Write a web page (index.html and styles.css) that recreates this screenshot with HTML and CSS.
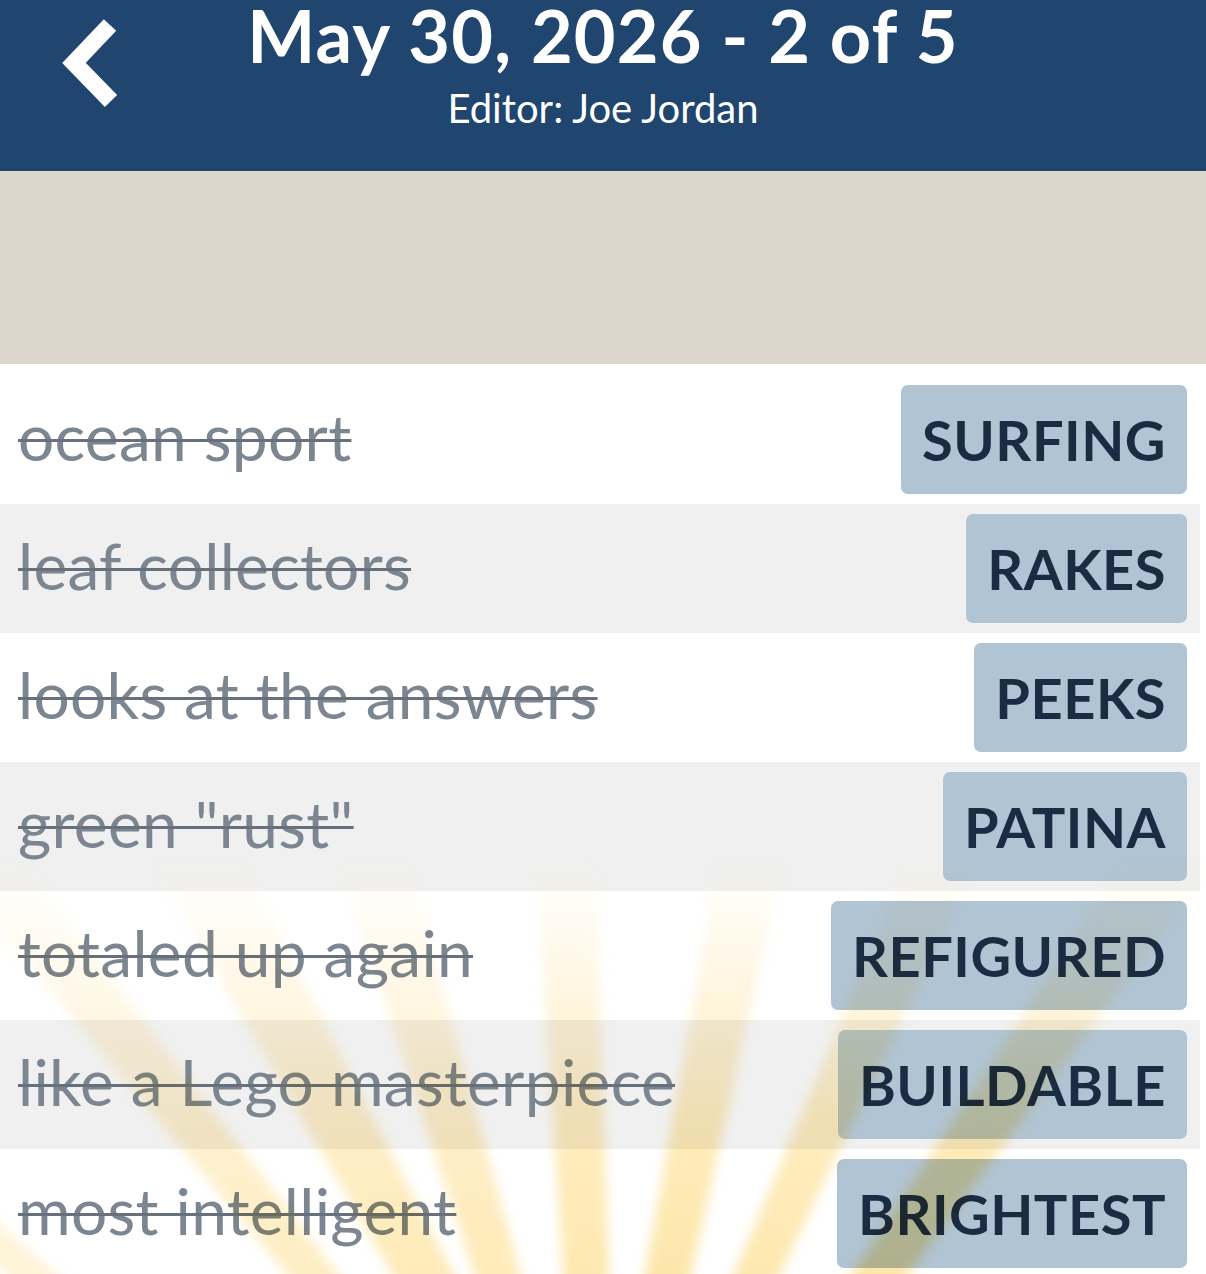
FILE: index.html
```html
<!DOCTYPE html>
<html lang="en">
<head>
  <meta charset="UTF-8" />
  <meta name="viewport" content="width=device-width, initial-scale=1" />
  <title>Puzzle Review</title>
  <link rel="stylesheet" href="styles.css">
</head>
<body>
  <header class="topbar">
    <a class="back" href="#" aria-label="Back">
      <svg width="80" height="105" viewBox="0 0 80 105">
        <path d="M60 15 L24 53 L61 91" fill="none" stroke="#fff" stroke-width="17" stroke-linejoin="miter" />
      </svg>
    </a>
    <div class="heading">
      <h1 class="title">May 30, 2026 - 2 of 5</h1>
      <div class="editor">Editor: Joe Jordan</div>
    </div>
    <div></div>
  </header>

  <div class="banner"></div>

  <ul class="clues">
    <li class="row"><span class="clue">ocean sport</span><span class="answer">SURFING</span></li>
    <li class="row"><span class="clue">leaf collectors</span><span class="answer">RAKES</span></li>
    <li class="row"><span class="clue">looks at the answers</span><span class="answer">PEEKS</span></li>
    <li class="row"><span class="clue">green "rust"</span><span class="answer">PATINA</span></li>
    <li class="row"><span class="clue">totaled up again</span><span class="answer">REFIGURED</span></li>
    <li class="row"><span class="clue">like a Lego masterpiece</span><span class="answer">BUILDABLE</span></li>
    <li class="row"><span class="clue">most intelligent</span><span class="answer">BRIGHTEST</span></li>
  </ul>

  <!-- celebration rays rising from the bottom edge -->
  <svg class="sunburst" width="1206" height="1274" viewBox="0 0 1206 1274" aria-hidden="true">
    <defs>
      <linearGradient id="glow" gradientUnits="userSpaceOnUse" x1="0" y1="1274" x2="0" y2="860">
        <stop offset="0" stop-color="#fde29b" stop-opacity="1" />
        <stop offset="0.35" stop-color="#fde29b" stop-opacity="0.8" />
        <stop offset="0.7" stop-color="#fde29b" stop-opacity="0.35" />
        <stop offset="1" stop-color="#fde29b" stop-opacity="0" />
      </linearGradient>
      <filter id="soft" x="-10%" y="-10%" width="120%" height="120%">
        <feGaussianBlur stdDeviation="6" />
      </filter>
    </defs>
    <g id="rays" fill="url(#glow)" filter="url(#soft)"></g>
  </svg>

  <script>
    // x at the bottom, lean (px across per px up), bottom width, top width, strength
    const rays = [
      [50, -1.2, 50, 80, 0.4],
      [325, -0.8, 50, 80, 0.6],
      [432, -0.55, 60, 90, 0.7],
      [502, -0.3, 45, 70, 0.7],
      [587, -0.05, 45, 60, 0.8],
      [665, 0.2, 45, 65, 0.85],
      [750, 0.45, 45, 70, 0.8],
      [869, 0.7, 55, 90, 0.85]
    ];
    const rayBottom = 1290, rayTop = 850;
    const group = document.getElementById('rays');

    rays.forEach(([bx, lean, bw, tw, strength]) => {
      const tx = bx + lean * (rayBottom - rayTop);
      const points = [
        [bx - bw / 2, rayBottom],
        [bx + bw / 2, rayBottom],
        [tx + tw / 2, rayTop],
        [tx - tw / 2, rayTop]
      ].map(p => p[0].toFixed(1) + ',' + p[1]).join(' ');
      const poly = document.createElementNS('http://www.w3.org/2000/svg', 'polygon');
      poly.setAttribute('points', points);
      poly.setAttribute('opacity', strength);
      group.appendChild(poly);
    });
  </script>
</body>
</html>
```

FILE: styles.css
```css
* {
  box-sizing: border-box;
}

html,
body {
  overflow: hidden;
}

body {
  margin: 0;
  position: relative;
  background: #fff;
  font-family: Lato, 'Open Sans', sans-serif;
}

.topbar {
  height: 171px;
  background: #20466f;
  color: #fff;
  display: grid;
  grid-template-columns: 1fr auto 1fr;
}

.back {
  align-self: start;
  margin: 10px 0 0 50px;
  width: 80px;
  height: 105px;
}

.back svg {
  display: block;
}

.heading {
  text-align: center;
  padding-top: 2px;
}

.title {
  margin: 0;
  font-size: 72px;
  line-height: 66px;
  letter-spacing: 1.2px;
  font-weight: 700;
}

.editor {
  margin-top: 16px;
  font-size: 40px;
  line-height: 48px;
}

.banner {
  height: 193px;
  background: #ddd7cb;
}

.clues {
  list-style: none;
  margin: 0;
  padding: 11px 0 0;
  width: 1200px;
}

.row {
  height: 129px;
  display: flex;
  align-items: center;
  justify-content: space-between;
  padding: 0 13px 0 18px;
}

.row:nth-child(even) {
  background: #f0f0f0;
}

.clue {
  font-size: 64px;
  line-height: 79px;
  letter-spacing: 0.3px;
  margin-bottom: 6px;
  color: #7c8691;
  text-decoration: line-through;
  text-decoration-color: #67717d;
  text-decoration-thickness: 3px;
}

.answer {
  height: 109px;
  display: flex;
  align-items: center;
  padding: 0 21px;
  background: #b1c4d3;
  border-radius: 7px;
  color: #1b2b42;
  font-size: 56px;
  letter-spacing: 0.5px;
  font-weight: 700;
}

.sunburst {
  position: absolute;
  top: 0;
  left: 0;
  pointer-events: none;
  mix-blend-mode: multiply;
}
```
